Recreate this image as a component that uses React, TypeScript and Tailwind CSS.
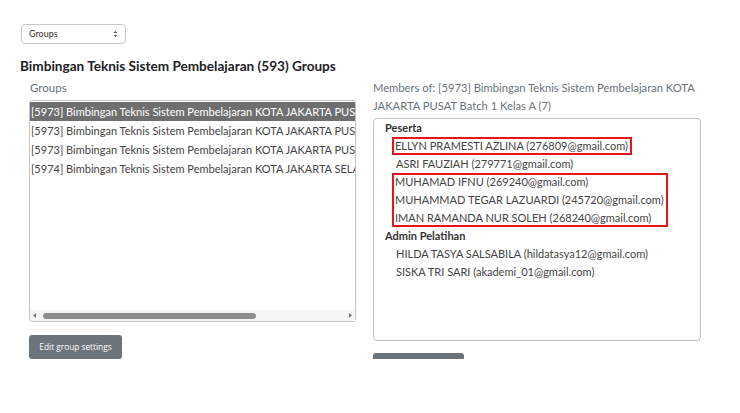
import React from "react";

const groups = [
  "[5973] Bimbingan Teknis Sistem Pembelajaran KOTA JAKARTA PUSAT Batch 1 Kelas A (7)",
  "[5973] Bimbingan Teknis Sistem Pembelajaran KOTA JAKARTA PUSAT Batch 1 Kelas B (7)",
  "[5973] Bimbingan Teknis Sistem Pembelajaran KOTA JAKARTA PUSAT Batch 1 Kelas C (7)",
  "[5974] Bimbingan Teknis Sistem Pembelajaran KOTA JAKARTA SELATAN Batch 1 Kelas A (7)",
];

export default function App() {
  return (
    <div
      className="w-[740px] h-[413px] bg-white text-[#1d2125] overflow-hidden"
      style={{ fontFamily: 'Lato, "Noto Sans", sans-serif' }}
    >
      <div className="h-[359px] overflow-hidden pl-[21px] pt-[24px]">
        <div className="w-[105px] h-[20px] border border-[#c8c8c8] rounded-[4px] flex items-center justify-between pl-[7px] pr-[7px] text-[9px] text-[#333]">
          <span>Groups</span>
          <svg width="5" height="8" viewBox="0 0 5 8">
            <path d="M0.5 3 L2.5 1 L4.5 3 Z" fill="#555" />
            <path d="M0.5 5 L2.5 7 L4.5 5 Z" fill="#555" />
          </svg>
        </div>
        <h2 className="mt-[13px] text-[13.6px] font-bold leading-[18px] text-[#1d2125] -ml-px">
          Bimbingan Teknis Sistem Pembelajaran (593) Groups
        </h2>
        <div className="flex gap-[17px] ml-[8px] mt-[3px]">
          <div className="w-[327px] flex flex-col">
            <div className="text-[11.5px] text-[#6a737b] leading-[18px] pl-[1px] h-[18px] mt-[1px]">Groups</div>
            <div className="mt-[3px] h-[222px] border border-[#c3c3c3] rounded-[3px] flex flex-col overflow-hidden">
              <div className="flex-1 overflow-hidden pt-[1px] text-[11px] leading-[19px] text-[#444]">
                {groups.map((g, i) => (
                  <div
                    key={i}
                    className={
                      "whitespace-nowrap pl-[1px] h-[19px] " +
                      (i === 0 ? "bg-[#6f6f6f] text-white" : "")
                    }
                  >
                    {g}
                  </div>
                ))}
              </div>
              <div className="h-[11px] bg-[#f5f5f5] flex items-center px-[2px] gap-[5px]">
                <svg width="6" height="7" viewBox="0 0 6 7">
                  <path d="M4 1 L1 3.5 L4 6 Z" fill="#777" />
                </svg>
                <div className="flex-1 flex items-center">
                  <div className="w-[213px] h-[6px] rounded-full bg-[#8d8d8d]" />
                </div>
                <svg width="6" height="7" viewBox="0 0 6 7">
                  <path d="M2 1 L5 3.5 L2 6 Z" fill="#777" />
                </svg>
              </div>
            </div>
            <div className="mt-[10px]">
              <button
                className="h-[24px] w-[93px] bg-[#6b737b] rounded-[3px] text-white text-[8.3px] leading-none"
                style={{ fontFamily: '"Open Sans", sans-serif' }}
              >
                Edit group settings
              </button>
            </div>
          </div>
          <div className="w-[328px] flex flex-col">
            <div className="w-[334px] text-[11.2px] text-[#6a737b] leading-[18px] mt-[1px]">
              Members of: [5973] Bimbingan Teknis Sistem Pembelajaran KOTA JAKARTA PUSAT Batch 1 Kelas A (7)
            </div>
            <div className="mt-[3px] h-[223px] border border-[#c3c3c3] rounded-[4px] text-[11px] leading-[18px] text-[#444]">
              <div className="pl-[11px] font-bold text-[#333]">Peserta</div>
              <div className="pl-[18px]">
                <div className="w-fit shadow-[inset_0_0_0_2px_#e8141c] pl-[3px] pr-[4px]">
                  ELLYN PRAMESTI AZLINA (276809@gmail.com)
                </div>
                <div className="pl-[4px]">ASRI FAUZIAH (279771@gmail.com)</div>
                <div className="w-fit shadow-[inset_0_0_0_2px_#e8141c] pl-[3px] pr-[4px]">
                  <div>MUHAMAD IFNU (269240@gmail.com)</div>
                  <div>MUHAMMAD TEGAR LAZUARDI (245720@gmail.com)</div>
                  <div>IMAN RAMANDA NUR SOLEH (268240@gmail.com)</div>
                </div>
              </div>
              <div className="pl-[11px] font-bold text-[#333]">Admin Pelatihan</div>
              <div className="pl-[22px]">
                <div>HILDA TASYA SALSABILA (hildatasya12@gmail.com)</div>
                <div>SISKA TRI SARI (akademi_01@gmail.com)</div>
              </div>
            </div>
            <div className="mt-[9px]">
              <button className="h-[24px] w-[91px] bg-[#6b737b] rounded-[3px] text-white text-[9.5px] leading-none">
                Remove
              </button>
            </div>
          </div>
        </div>
      </div>
    </div>
  );
}
